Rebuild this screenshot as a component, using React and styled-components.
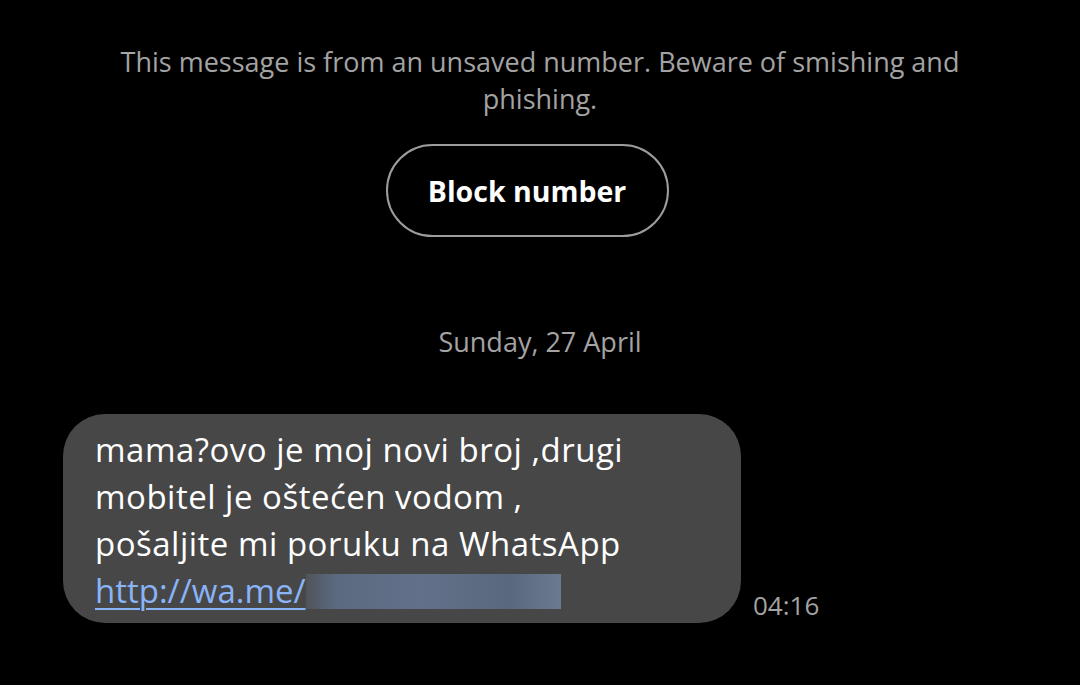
import React from 'react';
import styled, { createGlobalStyle } from 'styled-components';

const GlobalStyle = createGlobalStyle`
  html, body {
    margin: 0;
    padding: 0;
    background: #000;
  }
  body {
    font-family: "Open Sans", Roboto, sans-serif;
    -webkit-font-smoothing: antialiased;
  }
`;

const Screen = styled.div`
  width: 1080px;
  height: 685px;
  background: #000;
  display: flex;
  flex-direction: column;
  overflow: hidden;
`;

const Notice = styled.section`
  display: flex;
  flex-direction: column;
  align-items: center;
  padding: 43px 100px 0;
`;

const NoticeText = styled.p`
  margin: 0;
  text-align: center;
  color: #a3a3a3;
  font-size: 27px;
  line-height: 37px;
`;

const BlockButton = styled.button`
  margin: 27px 0 0 -26px;
  width: 283px;
  height: 93px;
  border-radius: 47px;
  border: 2px solid #9c9c9c;
  background: transparent;
  color: #fff;
  font-family: inherit;
  font-size: 28.5px;
  font-weight: 700;
  cursor: pointer;
`;

const DateLabel = styled.div`
  margin-top: 88px;
  text-align: center;
  color: #a3a3a3;
  font-size: 27px;
  line-height: 34px;
`;

const Row = styled.div`
  display: flex;
  align-items: flex-end;
  gap: 12px;
  margin: 55px 0 0 63px;
`;

const Bubble = styled.div`
  width: 678px;
  box-sizing: border-box;
  background: #474747;
  border-radius: 42px;
  padding: 12px 32px 9px;
  color: #fff;
  font-size: 33px;
  letter-spacing: 0.5px;
  line-height: 47px;
`;

const Link = styled.a`
  color: #8ab4f8;
  letter-spacing: 0;
  text-decoration: underline;
  text-decoration-thickness: 2px;
  text-underline-offset: 5px;
`;

const Redacted = styled.span`
  display: inline-block;
  vertical-align: -6px;
  width: 255px;
  height: 35px;
  background: linear-gradient(90deg, rgba(138,160,200,0.15) 0%, #5b6a80 12%, #627189 45%, #5a687d 80%, #6b7a90 100%);
  filter: blur(0.6px);
`;

const Time = styled.span`
  color: #a3a3a3;
  font-size: 26px;
  line-height: 30px;
  margin-bottom: 3px;
`;

export default function App() {
  return (
    <Screen>
      <GlobalStyle />
      <Notice>
        <NoticeText>
          This message is from an unsaved number. Beware of smishing and phishing.
        </NoticeText>
        <BlockButton>Block number</BlockButton>
      </Notice>
      <DateLabel>Sunday, 27 April</DateLabel>
      <Row>
        <Bubble>
          mama?ovo je moj novi broj ,drugi
          <br />
          mobitel je oštećen vodom ,
          <br />
          pošaljite mi poruku na WhatsApp
          <br />
          <Link>http://wa.me/</Link>
          <Redacted />
        </Bubble>
        <Time>04:16</Time>
      </Row>
    </Screen>
  );
}
